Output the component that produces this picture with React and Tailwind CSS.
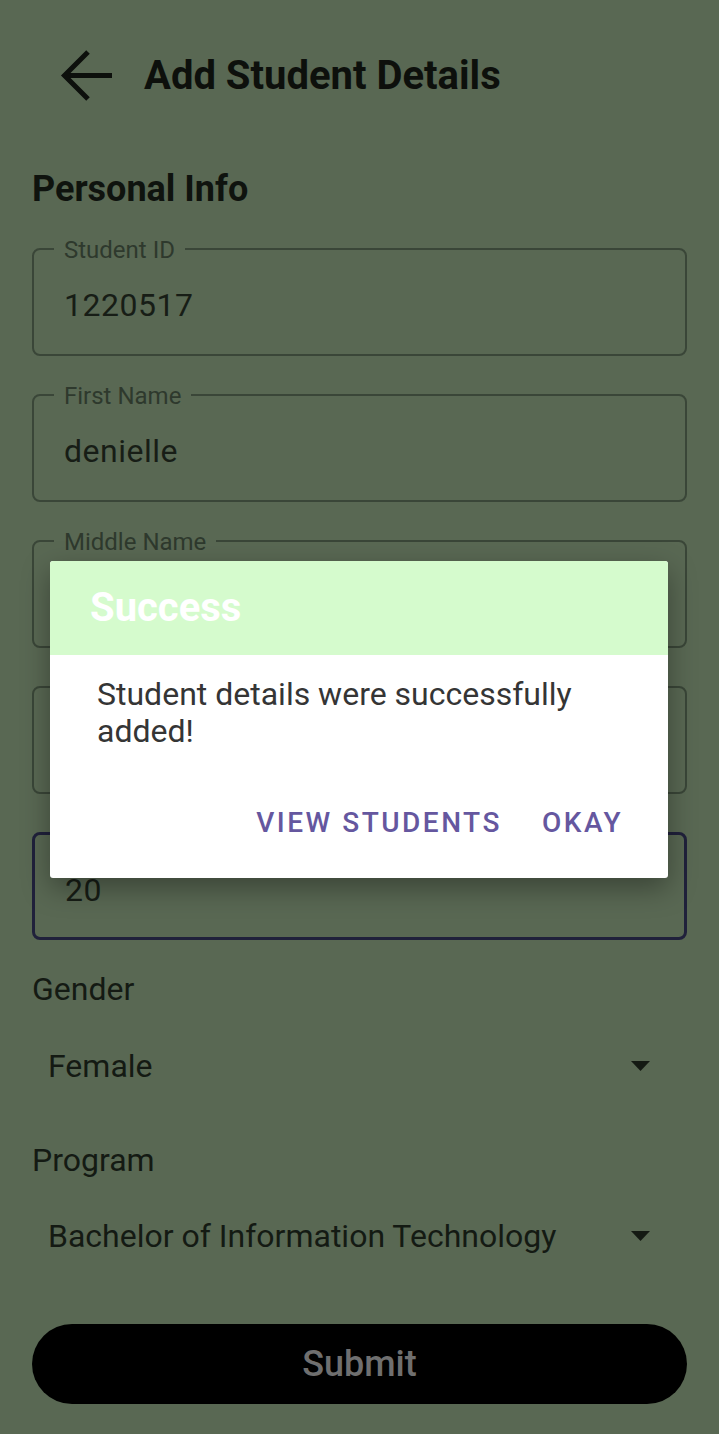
import { useState } from 'react';

// the last two labels sit under the dialog, so they are left out
const fields = [
  { id: 'studentId', label: 'Student ID', value: '1220517' },
  { id: 'firstName', label: 'First Name', value: 'denielle' },
  { id: 'middleName', label: 'Middle Name', value: '' },
  { id: 'lastName', label: '', value: '' },
  { id: 'age', label: '', value: '20', focused: true },
];

function BackArrow() {
  return (
    <svg width="54" height="56" viewBox="0 0 54 56" fill="none" stroke="#0d100c" strokeWidth="5">
      <path d="M53 27.5H6" />
      <path d="M29 4L5.5 27.5L29 51" />
    </svg>
  );
}

function Caret() {
  return (
    <svg width="19" height="10" viewBox="0 0 19 10">
      <path d="M0 0h19L9.5 10z" fill="#141a13" />
    </svg>
  );
}

function OutlinedField({ label, value, focused }) {
  return (
    <div
      className={
        focused
          ? 'relative h-[108px] rounded-[8px] border-[3px] border-[#20213b]'
          : 'relative h-[108px] rounded-[8px] border-2 border-[#3a4638]'
      }
    >
      {label && (
        <span className="absolute -top-[12px] left-[20px] bg-[#596853] px-[10px] text-[24px] leading-[24px] text-[#2e392d]">
          {label}
        </span>
      )}
      <div className="pl-[30px] pt-[35px] text-[32px] leading-[40px] tracking-[0.5px] text-[#171d16]">{value}</div>
    </div>
  );
}

function Spinner({ value }) {
  return (
    <div className="flex h-[40px] items-center justify-between pl-[16px] pr-[37px]">
      <span className="text-[32px] leading-[40px] text-[#141a13]">{value}</span>
      <Caret />
    </div>
  );
}

export default function App() {
  const [open] = useState(true);

  return (
    <div className="relative min-h-[1434px] overflow-hidden bg-[#596853] font-['Roboto',sans-serif]">
      <div className="mt-[50px] flex h-[52px] items-center pl-[59px]">
        <BackArrow />
        <h1 className="ml-[31px] text-[40px] font-bold leading-[52px] text-[#0d100c]">Add Student Details</h1>
      </div>

      <div className="px-8">
        <h2 className="mt-[67px] text-[36px] font-bold leading-[40px] text-[#0f130e]">Personal Info</h2>

        <div className="mt-[39px] flex flex-col gap-[38px]">
          {fields.map((f) => (
            <OutlinedField key={f.id} label={f.label} value={f.value} focused={f.focused} />
          ))}
        </div>

        <div className="mt-[29px] text-[32px] leading-[40px] text-[#141a13]">Gender</div>
        <div className="mt-[37px]">
          <Spinner value="Female" />
        </div>

        <div className="mt-[54px] text-[32px] leading-[40px] text-[#141a13]">Program</div>
        <div className="mt-[36px]">
          <Spinner value="Bachelor of Information Technology" />
        </div>

        <button className="mt-[68px] flex h-[80px] w-full items-center justify-center rounded-full bg-black text-[36px] font-medium text-[#6f6f6f]">
          Submit
        </button>
      </div>

      {open && (
        <div className="absolute left-[50px] top-[561px] w-[618px] overflow-hidden rounded-[3px] bg-white shadow-[0_10px_28px_rgba(0,0,0,0.35)]">
          <div className="flex h-[94px] items-center bg-[#d5fbcd] pl-[40px]">
            <span className="text-[40px] font-bold text-white">Success</span>
          </div>
          <div className="h-[223px] pl-[47px] pr-[40px] pt-[21px]">
            <p className="text-[32px] leading-[37px] text-[#353535]">
              Student details were successfully added!
            </p>
            <div className="mt-[52px] flex justify-end gap-[40px] pr-[5px]">
              <span className="text-[28px] font-medium uppercase tracking-[2.5px] text-[#65579f]">View Students</span>
              <span className="text-[28px] font-medium uppercase tracking-[2.5px] text-[#65579f]">Okay</span>
            </div>
          </div>
        </div>
      )}
    </div>
  );
}
